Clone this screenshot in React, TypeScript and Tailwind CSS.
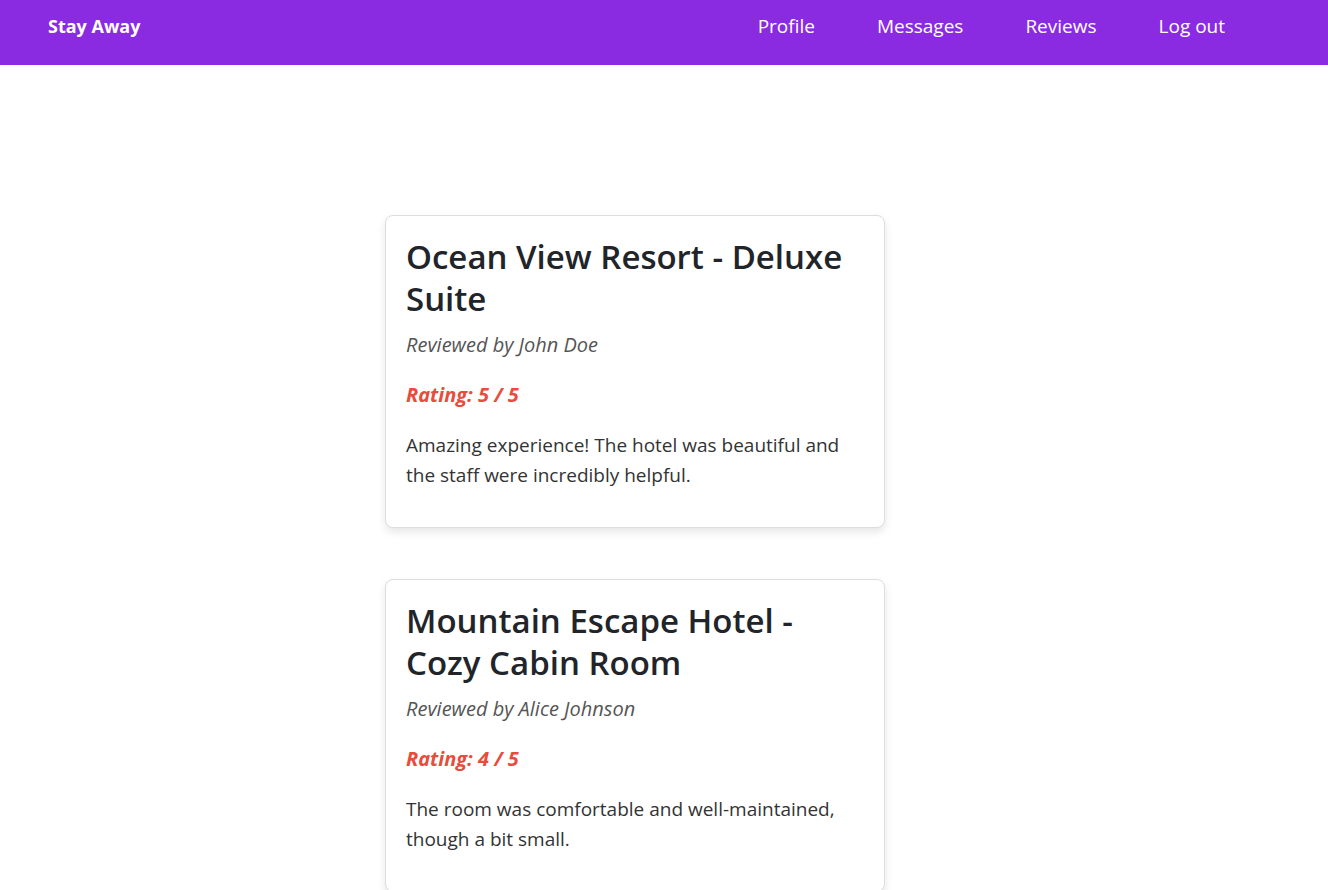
const REVIEWS = [
  {
    hotel: "Ocean View Resort - Deluxe Suite",
    author: "John Doe",
    rating: 5,
    text: "Amazing experience! The hotel was beautiful and the staff were incredibly helpful.",
  },
  {
    hotel: "Mountain Escape Hotel - Cozy Cabin Room",
    author: "Alice Johnson",
    rating: 4,
    text: "The room was comfortable and well-maintained, though a bit small.",
  },
];

const NAV = ["Profile", "Messages", "Reviews", "Log out"];

export default function App() {
  return (
    <div className="min-h-screen bg-white font-['Open_Sans',sans-serif] text-[#212529]">
      {/* Navbar */}
      <nav className="flex h-[65px] items-center justify-between bg-[#8a2be2] pb-[12px] pl-[48px] pr-[103px] text-white">
        <span className="text-[18px] font-bold">Stay Away</span>
        <div className="flex items-center gap-[62px] text-[19px]">
          {NAV.map((n) => (
            <a key={n} href="#" className="text-white">
              {n}
            </a>
          ))}
        </div>
      </nav>

      {/* Reviews */}
      <main className="ml-[385px] flex w-[500px] flex-col gap-[51px] pt-[150px] pb-10">
        {REVIEWS.map((r) => (
          <ReviewCard key={r.hotel} {...r} />
        ))}
      </main>
    </div>
  );
}

function ReviewCard({
  hotel,
  author,
  rating,
  text,
}: {
  hotel: string;
  author: string;
  rating: number;
  text: string;
}) {
  return (
    <div className="rounded-lg border border-[#dddddd] bg-white p-5 shadow-[0_4px_8px_rgba(0,0,0,0.1)]">
      <h2 className="text-[33px] font-semibold leading-[42px] text-[#212529]">{hotel}</h2>
      <p className="mt-[11px] text-[20px] italic leading-[28px] text-[#555]">Reviewed by {author}</p>
      <p className="mt-[22px] text-[20px] font-bold italic leading-[28px] text-[#e74c3c]">
        Rating: {rating} / 5
      </p>
      <p className="mt-[21px] text-[19px] leading-[30px] text-[#333]">{text}</p>
      <div className="h-[17px]" />
    </div>
  );
}
